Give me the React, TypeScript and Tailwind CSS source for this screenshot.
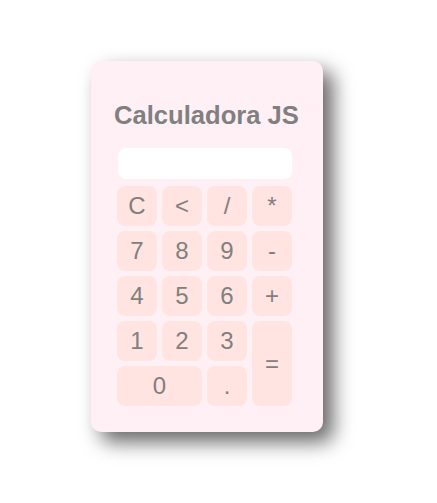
const keys: { label: string; cls?: string }[] = [
  { label: "C" },
  { label: "<" },
  { label: "/" },
  { label: "*" },
  { label: "7" },
  { label: "8" },
  { label: "9" },
  { label: "-" },
  { label: "4" },
  { label: "5" },
  { label: "6" },
  { label: "+" },
  { label: "1" },
  { label: "2" },
  { label: "3" },
  { label: "=", cls: "row-span-2" },
  { label: "0", cls: "col-span-2" },
  { label: "." },
];

export default function App() {
  return (
    <div className="w-[437px] h-[503px] bg-white font-['Liberation_Sans',Arial,sans-serif] pt-[61px] pl-[91px]">
      <div className="w-[232px] h-[371px] bg-[#fff0f5] rounded-[10px] shadow-[10px_10px_20px_rgba(0,0,0,0.6)] pl-[26px] pt-[40px]">
        <h1 className="-ml-[3px] text-[25.6px] leading-[28px] font-bold text-[#808080] whitespace-nowrap">
          Calculadora JS
        </h1>
        <input
          type="text"
          className="mt-[19px] block w-[174px] h-[31px] rounded-lg bg-white border-0 outline-none ml-[1px]"
        />
        <div className="mt-[7px] grid grid-cols-[repeat(4,40px)] auto-rows-[40px] gap-[5px]">
          {keys.map((k) => (
            <button
              key={k.label}
              className={`bg-[#ffe4e1] rounded-lg text-[24px] text-[#808080] flex items-center justify-center ${k.cls ?? ""}`}
            >
              {k.label}
            </button>
          ))}
        </div>
      </div>
    </div>
  );
}
